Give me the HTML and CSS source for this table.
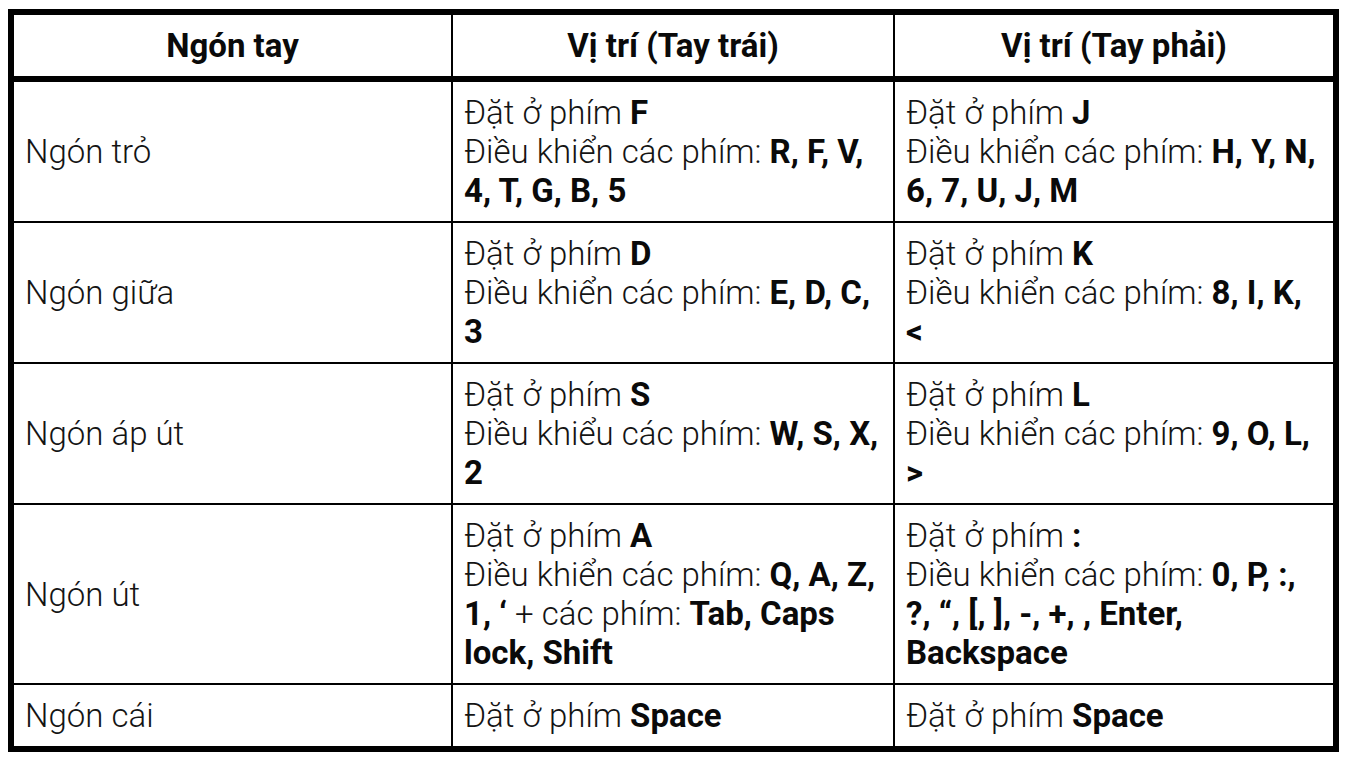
FILE: index.html
```html
<!DOCTYPE html>
<html lang="vi">
<head>
<meta charset="utf-8">
<title>Ngón tay</title>
<link rel="stylesheet" href="styles.css">
</head>
<body>
<table class="keys">
  <colgroup>
    <col class="c1"><col class="c2"><col class="c3">
  </colgroup>
  <thead>
    <tr>
      <th class="col-a">Ngón tay</th>
      <th class="col-b">Vị trí (Tay trái)</th>
      <th class="col-c">Vị trí (Tay phải)</th>
    </tr>
  </thead>
  <tbody>
    <tr>
      <td class="col-a">Ngón trỏ</td>
      <td class="col-b">Đặt ở phím <b>F</b><br>Điều khiển các phím: <b>R, F, V, 4, T, G, B, 5</b></td>
      <td class="col-c">Đặt ở phím <b>J</b><br>Điều khiển các phím: <b>H, Y, N, 6, 7, U, J, M</b></td>
    </tr>
    <tr>
      <td class="col-a">Ngón giữa</td>
      <td class="col-b">Đặt ở phím <b>D</b><br>Điều khiển các phím: <b>E, D, C, 3</b></td>
      <td class="col-c">Đặt ở phím <b>K</b><br>Điều khiển các phím: <b>8, I, K, &lt;</b></td>
    </tr>
    <tr>
      <td class="col-a">Ngón áp út</td>
      <td class="col-b">Đặt ở phím <b>S</b><br>Điều khiểu các phím: <b>W, S, X, 2</b></td>
      <td class="col-c">Đặt ở phím <b>L</b><br>Điều khiển các phím: <b>9, O, L, &gt;</b></td>
    </tr>
    <tr>
      <td class="col-a">Ngón út</td>
      <td class="col-b">Đặt ở phím <b>A</b><br>Điều khiển các phím: <b>Q, A, Z, 1, ‘</b> + các phím: <b>Tab, Caps lock, Shift</b></td>
      <td class="col-c">Đặt ở phím <b>:</b><br>Điều khiển các phím: <b>0, P, :, ?, “, [, ], -, +, , Enter, Backspace</b></td>
    </tr>
    <tr class="last">
      <td class="col-a">Ngón cái</td>
      <td class="col-b">Đặt ở phím <b>Space</b></td>
      <td class="col-c">Đặt ở phím <b>Space</b></td>
    </tr>
  </tbody>
</table>
</body>
</html>
```
FILE: styles.css
```css
html, body {
  background: #ffffff;
}
body {
  margin: 9px 8px 0 8px;
  font-family: Roboto, "Liberation Sans", sans-serif;
  color: #141414;
}
.keys {
  width: 1331px;
  border-collapse: separate;
  border-spacing: 0;
  border: 6px solid #000;
  table-layout: fixed;
  font-size: 33px;
  line-height: 39px;
  font-weight: 300;
}
.c1 { width: 439px; }
.c2 { width: 442px; }
.c3 { width: 438px; }
.keys th,
.keys td {
  padding: 11px 11px 11px 11px;
  text-align: left;
  vertical-align: middle;
  border-right: 2px solid #000;
  border-bottom: 2px solid #000;
}
.keys th {
  text-align: center;
  font-weight: 700;
  color: #0a0a0a;
  border-bottom: 6px solid #000;
}
.keys td.col-a {
  padding-left: 11px;
}
.keys .col-c {
  border-right: none;
}
.keys tr.last td {
  border-bottom: none;
}
.keys b {
  font-weight: 700;
  color: #0a0a0a;
}
```
